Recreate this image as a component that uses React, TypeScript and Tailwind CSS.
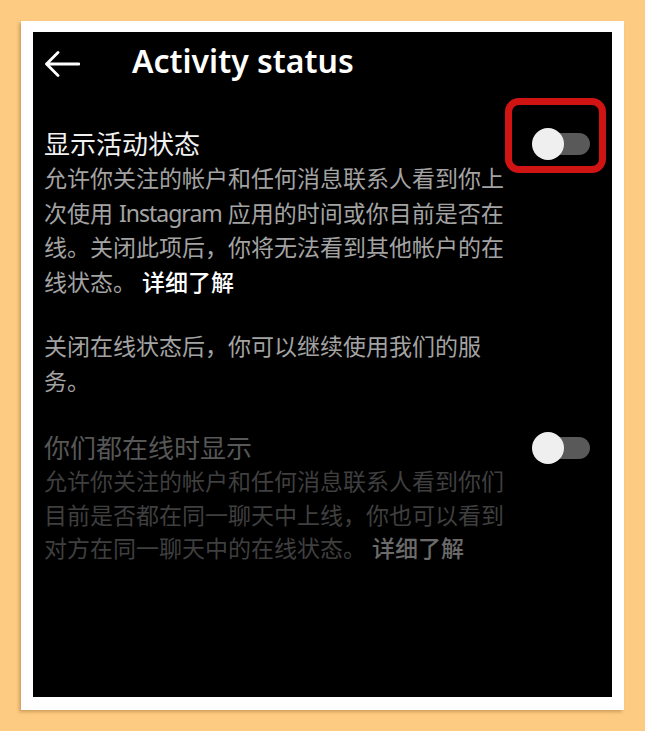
import React from "react";

const cjk = { fontFamily: '"Noto Sans", "Noto Sans CJK SC", sans-serif' };

const Toggle = () => (
  <div className="relative w-[58px] h-[32px] flex items-center shrink-0">
    <div className="absolute left-[8px] w-[50px] h-[22px] rounded-full bg-[#595959]"></div>
    <div className="absolute left-0 w-[32px] h-[32px] rounded-full bg-[#efefef]"></div>
  </div>
);

const BackArrow = () => (
  <svg width="36" height="28" viewBox="0 0 36 28" fill="none">
    <path
      d="M35 14H2.5M14 2.5L2.5 14L14 25.5"
      stroke="#ffffff"
      strokeWidth="2.8"
      strokeLinecap="round"
      strokeLinejoin="round"
    />
  </svg>
);

const App = () => {
  return (
    <div className="min-h-screen bg-[#fecb82] pt-[21px] pl-[21px]" style={cjk}>
      <div className="w-[603px] h-[689px] bg-white pt-[11px] px-3 shadow-[-2px_2px_3px_rgba(120,80,20,0.35)]">
        <div className="w-[579px] h-[665px] bg-black">
          {/* header */}
          <div className="h-[64px] flex items-center pl-[11px]">
            <BackArrow />
            <h1 className="ml-[52px] mb-[6px] text-[32px] font-semibold text-white">
              Activity status
            </h1>
          </div>

          {/* 显示活动状态 */}
          <div className="mt-[31px] pl-[11px] pr-[22px] flex justify-between items-start">
            <div className="w-[470px]">
              <p className="text-[26px] leading-[34px] text-[#f2f2f2]">显示活动状态</p>
              <p className="text-[23px] leading-[34.5px] text-[#a3a3a3]">
                允许你关注的帐户和任何消息联系人看到你上
                <br />
                次使用 <span className="tracking-[-1px]">Instagram</span> 应用的时间或你目前是否在
                <br />
                线。关闭此项后，你将无法看到其他帐户的在
                <br />
                线状态。 <span className="text-white font-medium">详细了解</span>
              </p>
            </div>
            <div className="relative mt-[1px]">
              <Toggle />
              <div className="absolute -left-[27px] -top-[30px] w-[101px] h-[75px] border-[7px] border-[#d01414] rounded-[14px]"></div>
            </div>
          </div>

          <p className="mt-[30px] pl-[11px] text-[23px] leading-[34.5px] text-[#a3a3a3]">
            关闭在线状态后，你可以继续使用我们的服
            <br />
            务。
          </p>

          {/* 你们都在线时显示 */}
          <div className="mt-[33px] pl-[11px] pr-[22px] flex justify-between items-start">
            <div className="w-[470px]">
              <p className="text-[26px] leading-[34px] text-[#575757]">你们都在线时显示</p>
              <p className="text-[23px] leading-[33.5px] text-[#3f3f3f]">
                允许你关注的帐户和任何消息联系人看到你们
                <br />
                目前是否都在同一聊天中上线，你也可以看到
                <br />
                对方在同一聊天中的在线状态。 <span className="text-[#6b6b6b] font-medium">详细了解</span>
              </p>
            </div>
            <div className="mt-[1px]">
              <Toggle />
            </div>
          </div>
        </div>
      </div>
    </div>
  );
};

export default App;
